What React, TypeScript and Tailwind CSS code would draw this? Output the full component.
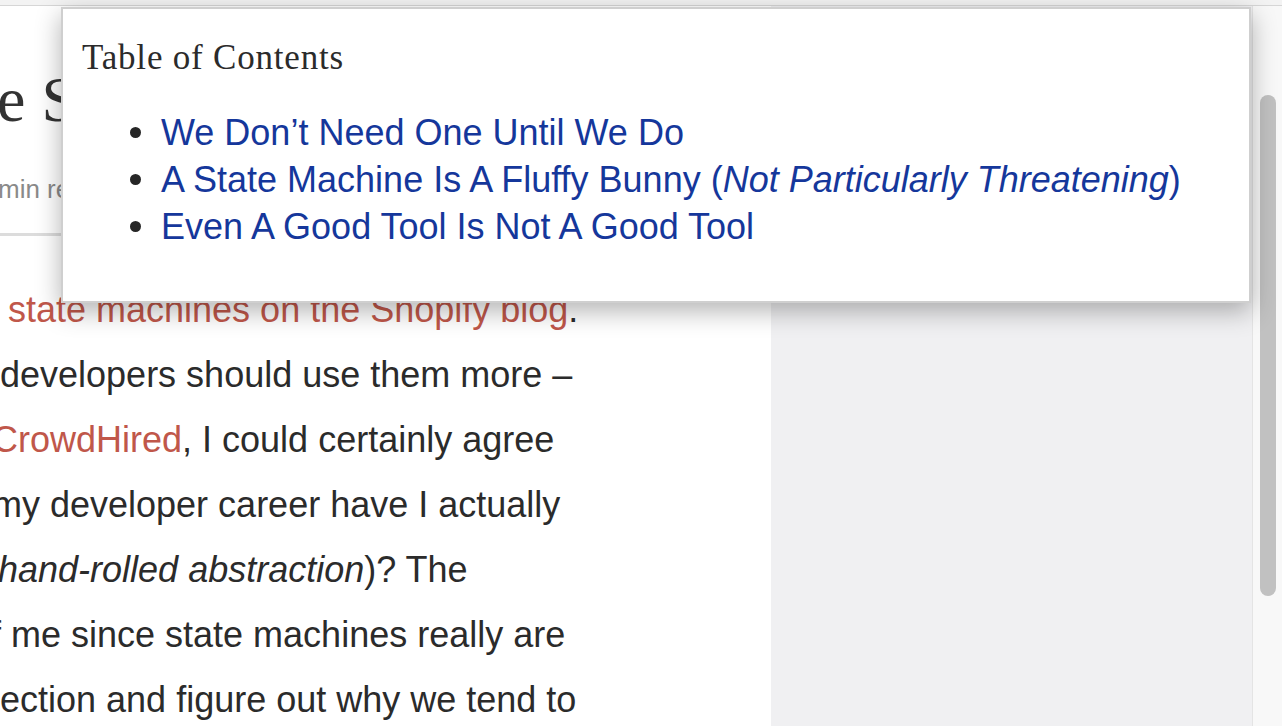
const sans = { fontFamily: '"Liberation Sans", Arial, sans-serif' };
const serif = { fontFamily: '"Liberation Serif", "Times New Roman", serif' };

const tocItems = [
  <>We Don’t Need One Until We Do</>,
  <>
    A State Machine Is A Fluffy Bunny (<em>Not Particularly Threatening</em>)
  </>,
  <>Even A Good Tool Is Not A Good Tool</>,
];

function Article() {
  return (
    <div className="w-[771px] shrink-0 bg-white text-[#2b2b2b] overflow-hidden" style={sans}>
      <div className="h-[116px] pt-[62px] -ml-[3px] text-[64px] leading-[64px] text-[#333] whitespace-nowrap" style={serif}>
        e State
      </div>
      <div className="mt-[50px] -ml-[2px] text-[26px] leading-[34px] text-[#8a8a8a] whitespace-nowrap">min read</div>
      <div className="mt-[27px] h-[3px] bg-[#dcdcdc]" />
      <div className="mt-[41px] text-[36px] leading-[65px] whitespace-nowrap">
        <div className="pl-[8px]">
          <span className="text-[#c0574a]">state machines on the Shopify blog</span>.
        </div>
        <div>developers should use them more –</div>
        <div className="-ml-[8px]">
          <span className="text-[#c0574a]">CrowdHired</span>, I could certainly agree
        </div>
        <div className="-ml-[8px]">my developer career have I actually</div>
        <div className="-ml-[2px]">
          <em>hand-rolled abstraction</em>)? The
        </div>
        <div className="-ml-[9px]">f me since state machines really are</div>
        <div>ection and figure out why we tend to</div>
      </div>
    </div>
  );
}

function TocPopup() {
  return (
    <div className="absolute left-[61px] top-[7px] w-[1190px] h-[296px] bg-white border-2 border-[#cfcfcf] shadow-[0_8px_24px_rgba(0,0,0,0.3)]">
      <div className="pl-[19px] pt-[30px] text-[35px] leading-[38px] text-[#2b2b2b] tracking-[0.8px]" style={serif}>
        Table of Contents
      </div>
      <ul className="mt-[32px] text-[36px] leading-[47px] text-[#15379b]" style={sans}>
        {tocItems.map((item, i) => (
          <li key={i} className="flex items-center whitespace-nowrap">
            <span className="ml-[67px] mr-[20px] w-[11px] h-[11px] rounded-full bg-[#262626] shrink-0" />
            <span>{item}</span>
          </li>
        ))}
      </ul>
    </div>
  );
}

export default function App() {
  return (
    <div className="relative w-[1282px] h-[726px] overflow-hidden bg-white flex flex-col">
      <div className="h-[6px] shrink-0 bg-[#f3f3f3] border-b border-[#d6d6d6]" />
      <div className="flex flex-1 min-h-0">
        <Article />
        <div className="flex-1 bg-[#f0f0f2]" />
        <div className="w-[30px] shrink-0 bg-[#f8f8f8] border-l border-[#e4e4e4] pt-[89px] pl-[7px]">
          <div className="w-[16px] h-[501px] rounded-full bg-[#c1c1c1]" />
        </div>
      </div>
      <TocPopup />
    </div>
  );
}
